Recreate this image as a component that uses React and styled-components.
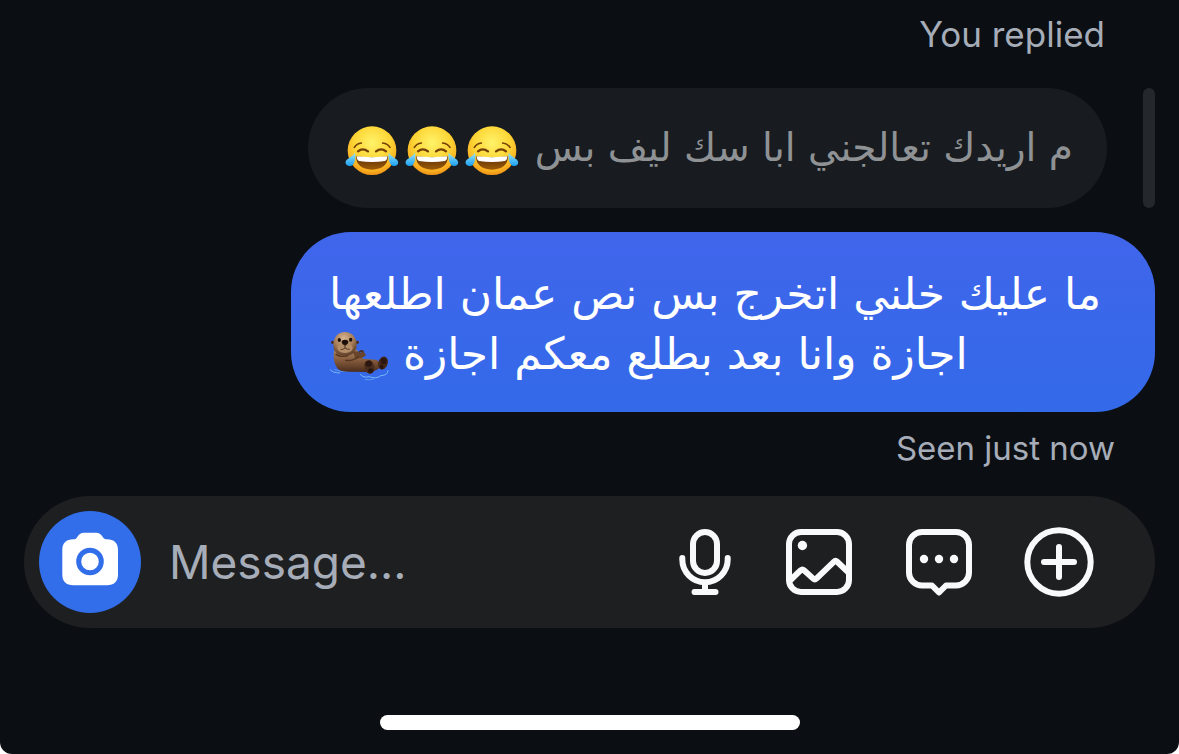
import React, { useState } from 'react'
import styled, { createGlobalStyle } from 'styled-components'

const GlobalStyle = createGlobalStyle`
  * {
    box-sizing: border-box;
  }

  body {
    margin: 0;
    background: #fff;
    font-family: Inter, 'Liberation Sans', sans-serif;
  }
`

const Screen = styled.main`
  display: flex;
  flex-direction: column;
  min-height: 100vh;
  padding: 10px 24px 24px;
  overflow: hidden;
  background: #0b0f14;
  border-radius: 0 0 12px 12px;
`

const Thread = styled.section`
  display: flex;
  flex-direction: column;
  align-items: flex-end;
`

const Meta = styled.p`
  margin: 0;
  padding-right: ${props => props.$inset};
  color: #a6adb8;
  font-size: ${props => props.$size};
  line-height: 48px;
`

const SeenMeta = styled(Meta)`
  margin-top: 12px;
`

const Quote = styled.blockquote`
  display: flex;
  justify-content: flex-end;
  gap: 36px;
  margin: 30px 0 24px;

  &::after {
    content: '';
    width: 12px;
    border-radius: 6px;
    background: #24272b;
  }
`

const Bubble = styled.p`
  margin: 0;
  padding: ${props => (props.$sent ? '32px 54px 28px 38px' : '30px 34px')};
  border-radius: 60px;
  background: ${props => (props.$sent ? 'linear-gradient(#4065eb, #336ae9)' : '#181b1f')};
  color: ${props => (props.$sent ? '#fff' : '#8f9295')};
  font-family: 'DejaVu Sans', sans-serif;
  font-size: ${props => (props.$sent ? '44px' : '39px')};
  line-height: 60px;
  text-align: left;

  svg {
    vertical-align: middle;
  }
`

const Composer = styled.form`
  display: flex;
  align-items: center;
  margin-top: 24px;
  padding: 15px 60px 15px 15px;
  border-radius: 66px;
  background: #1e1f21;
`

const IconButton = styled.button`
  display: flex;
  padding: 0;
  border: 0;
  background: none;
  color: #f8f9fb;
  cursor: pointer;
`

const CameraButton = styled(IconButton)`
  flex: none;
  align-items: center;
  justify-content: center;
  width: 102px;
  height: 102px;
  border-radius: 50%;
  background: #326ee9;
  color: #fff;
`

const MessageInput = styled.input`
  flex: 1;
  min-width: 0;
  padding: 0 28px;
  border: 0;
  outline: 0;
  background: none;
  color: #fff;
  font: 46px/60px Inter, 'Liberation Sans', sans-serif;

  &::placeholder {
    color: #a6adb8;
    opacity: 1;
  }
`

const Actions = styled.div`
  display: flex;
  gap: 48px;
`

const HomeIndicator = styled.div`
  width: 420px;
  max-width: 50%;
  height: 15px;
  margin: auto auto 0;
  border-radius: 8px;
  background: #fff;
`

const JoyEmoji = () => (
  <svg width="60" height="52" viewBox="44 38 180 156" role="img" aria-label="😂">
    <defs>
      <radialGradient id="joyFace" cx="50%" cy="34%" r="68%">
        <stop offset="0" stopColor="#fff36a" />
        <stop offset="0.55" stopColor="#fdd535" />
        <stop offset="0.85" stopColor="#f9ae20" />
        <stop offset="1" stopColor="#e98a13" />
      </radialGradient>
      <linearGradient id="joyMouth" x1="0" y1="0" x2="0" y2="1">
        <stop offset="0" stopColor="#5c2d05" />
        <stop offset="1" stopColor="#9b5b08" />
      </linearGradient>
      <linearGradient id="joyTear" x1="0" y1="0" x2="0" y2="1">
        <stop offset="0" stopColor="#9be6fd" />
        <stop offset="1" stopColor="#1a9ff0" />
      </linearGradient>
    </defs>
    <circle cx="134" cy="115" r="73" fill="url(#joyFace)" />
    <g fill="none" stroke="#753f08" strokeLinecap="round">
      <path d="M81 105Q88 94 102 92" strokeWidth="5" />
      <path d="M166 92Q181 94 188 105" strokeWidth="5" />
      <path d="M92 117Q106 105 122 117" strokeWidth="7" />
      <path d="M146 117Q162 105 176 117" strokeWidth="7" />
    </g>
    <path d="M86 132Q134 138 182 132Q181 171 134 172Q87 171 86 132Z" fill="url(#joyMouth)" />
    <path d="M88 132Q134 137 180 132Q180 143 173 146Q134 152 95 146Q88 143 88 132Z" fill="#fff" />
    <path d="M83 121C86 139 82 160 68 161C55 162 50 149 60 141C67 135 77 131 83 121Z" fill="url(#joyTear)" />
    <path d="M184 121C182 139 186 160 200 161C213 162 217 149 207 141C200 135 191 131 184 121Z" fill="url(#joyTear)" />
  </svg>
)

const OtterEmoji = () => (
  <svg width="60" height="54" viewBox="30 32 180 162" role="img" aria-label="🦦">
    <defs>
      <linearGradient id="otterFur" x1="0" y1="0" x2="0" y2="1">
        <stop offset="0" stopColor="#a98460" />
        <stop offset="0.5" stopColor="#82593b" />
        <stop offset="1" stopColor="#4a2d1c" />
      </linearGradient>
      <radialGradient id="otterHead" cx="45%" cy="28%" r="75%">
        <stop offset="0" stopColor="#d9b891" />
        <stop offset="0.55" stopColor="#a57c57" />
        <stop offset="1" stopColor="#573822" />
      </radialGradient>
    </defs>
    <g fill="none" stroke="#76b9f8" strokeWidth="3" strokeLinecap="round">
      <path d="M34 151Q38 160 62 161" />
      <path d="M124 165Q133 177 151 172Q172 180 185 169Q207 168 207 154" />
      <path d="M47 151Q65 158 84 157M139 181Q154 183 164 179" stroke="#5b9bf2" />
    </g>
    <path d="M45 93Q40 125 54 145Q61 157 88 157L151 158Q184 154 190 132L171 121L132 118L113 91Z" fill="url(#otterFur)" />
    <path d="M112 116Q115 106 123 108Q136 104 132 96Q126 92 121 98" fill="none" stroke="#4a2d1c" strokeWidth="5" strokeLinecap="round" />
    <path d="M103 99Q115 91 123 101Q128 96 136 100Q145 107 135 112Q124 119 108 116Z" fill="#6a452c" />
    <path d="M51 105Q65 115 87 109M80 123Q101 126 118 113" fill="none" stroke="#51331f" strokeWidth="4" strokeLinecap="round" />
    <ellipse cx="151" cy="143" rx="15" ry="21" transform="rotate(-12 151 143)" fill="#4b2d1d" />
    <ellipse cx="192" cy="131" rx="14" ry="20" transform="rotate(18 192 131)" fill="#452819" />
    <ellipse cx="149" cy="133" rx="10" ry="9" fill="#2c1710" />
    <ellipse cx="155" cy="154" rx="8" ry="7" fill="#2c1710" />
    <ellipse cx="194" cy="125" rx="9" ry="10" fill="#2c1710" />
    <ellipse cx="188" cy="143" rx="6" ry="7" fill="#2c1710" />
    <circle cx="41" cy="69" r="5" fill="#4a2d1c" />
    <circle cx="115" cy="69" r="5" fill="#4a2d1c" />
    <path d="M78 38C98 38 113 54 113 76C113 99 98 109 78 109C57 109 43 99 43 77C43 54 57 38 78 38Z" fill="url(#otterHead)" />
    <ellipse cx="78" cy="86" rx="23" ry="15" fill="#b28d68" />
    <ellipse cx="61" cy="62" rx="5" ry="6" fill="#1d100b" />
    <ellipse cx="95" cy="61" rx="5" ry="6" fill="#1d100b" />
    <path d="M68 65Q78 58 88 65Q89 75 78 79Q67 75 68 65Z" fill="#1d100b" />
    <path d="M78 77V85M66 91Q72 91 78 86Q84 91 91 90" fill="none" stroke="#5a3a26" strokeWidth="3" strokeLinecap="round" />
  </svg>
)

const CameraIcon = () => (
  <svg width="60" height="60" viewBox="0 0 60 60" aria-hidden="true">
    <path
      fill="currentColor"
      d="M24 0.7H36C39.5 0.7 41.2 2.4 42.6 4.8C43.8 6.7 45 7.3 47 7.3C54 7.3 58 11 58 18V42.5C58 49.5 54 53.3 47 53.3H13.3C6.3 53.3 2.3 49.5 2.3 42.5V18C2.3 11 6.3 7.3 13.3 7.3C15.3 7.3 16.5 6.7 17.4 4.8C18.8 2.4 20.5 0.7 24 0.7Z"
    />
    <circle cx="30" cy="29.5" r="11.3" fill="none" stroke="#326ee9" strokeWidth="5" />
  </svg>
)

const LineIcon = ({ width = 72, viewBox = '0 0 72 72', children }) => (
  <svg
    width={width}
    height="72"
    viewBox={viewBox}
    fill="none"
    stroke="currentColor"
    strokeWidth="6"
    strokeLinecap="round"
    strokeLinejoin="round"
    aria-hidden="true"
  >
    {children}
  </svg>
)

const MicIcon = () => (
  <LineIcon width={60} viewBox="6 0 60 72">
    <rect x="24" y="6" width="24" height="41" rx="12" />
    <path d="M13.3 32V33.5A22.7 22.7 0 0 0 58.7 33.5V32M36 57V66M25.5 66H46.5" />
  </LineIcon>
)

const PhotoIcon = () => (
  <LineIcon>
    <rect x="6" y="6" width="60" height="60" rx="12" />
    <circle cx="19.4" cy="19.5" r="4.7" fill="currentColor" stroke="none" />
    <path d="M7 54.5L17.8 44.2Q19.4 42.8 21 44.2L30.2 52.6Q31.8 54 33.4 52.6L50.8 35.8Q52.5 34.2 54.2 35.8L65 46" />
  </LineIcon>
)

const ChatIcon = () => (
  <LineIcon>
    <path d="M19 6H53A13 13 0 0 1 66 19V46.5A13 13 0 0 1 53 59.5H43L36 66.5L29 59.5H19A13 13 0 0 1 6 46.5V19A13 13 0 0 1 19 6Z" />
    <g fill="currentColor" stroke="none">
      <circle cx="21" cy="33" r="4.2" />
      <circle cx="36" cy="33" r="4.2" />
      <circle cx="51" cy="33" r="4.2" />
    </g>
  </LineIcon>
)

const PlusIcon = () => (
  <LineIcon>
    <circle cx="36" cy="36" r="31.7" />
    <path d="M21 36H51M36 21V51" />
  </LineIcon>
)

const actions = [
  { label: 'Record voice message', Icon: MicIcon },
  { label: 'Choose photo', Icon: PhotoIcon },
  { label: 'Quick replies', Icon: ChatIcon },
  { label: 'More', Icon: PlusIcon },
]

const App = () => {
  const [message, setMessage] = useState('')

  return (
    <>
      <GlobalStyle />
      <Screen>
        <Thread>
          <Meta $size="35px" $inset="50px">You replied</Meta>
          <Quote>
            <Bubble dir="rtl" lang="ar">
              م اريدك تعالجني ابا سك ليف بس{' '}
              <JoyEmoji />
              <JoyEmoji />
              <JoyEmoji />
            </Bubble>
          </Quote>
          <Bubble $sent dir="rtl" lang="ar">
            ما عليك خلني اتخرج بس نص عمان اطلعها
            <br />
            اجازة وانا بعد بطلع معكم اجازة{' '}
            <OtterEmoji />
          </Bubble>
          <SeenMeta $size="33px" $inset="40px">Seen just now</SeenMeta>
        </Thread>
        <Composer onSubmit={e => e.preventDefault()}>
          <CameraButton type="button" aria-label="Camera">
            <CameraIcon />
          </CameraButton>
          <MessageInput
            type="text"
            aria-label="Message"
            placeholder="Message..."
            value={message}
            onChange={e => setMessage(e.target.value)}
          />
          <Actions>
            {actions.map(({ label, Icon }) => (
              <IconButton type="button" key={label} aria-label={label}>
                <Icon />
              </IconButton>
            ))}
          </Actions>
        </Composer>
        <HomeIndicator />
      </Screen>
    </>
  )
}

export default App
